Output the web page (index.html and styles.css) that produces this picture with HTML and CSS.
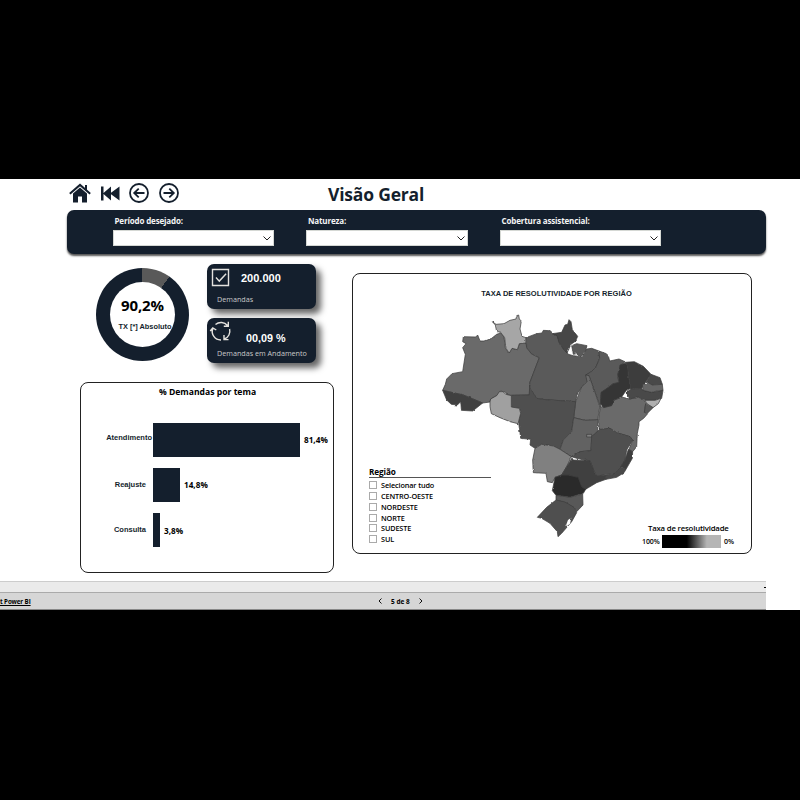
FILE: index.html
```html
<!DOCTYPE html>
<html lang="pt-BR">
<head>
<meta charset="utf-8">
<title>Visão Geral</title>
<link rel="stylesheet" href="styles.css">
</head>
<body>
<div class="report">
  <header class="top">
    <nav class="nav">
      <svg class="ic-home" viewBox="0 0 22 20"><path d="M4 10.5 11 4.400l7 6.100V19.500h-5v-6H9v6H4z" fill="#141f2d"/><path d="M.8 10.800 11 1.900l10.200 8.900M17 6.500V2" fill="none" stroke="#141f2d" stroke-width="2"/></svg>
      <svg class="ic-first" viewBox="0 0 19 15"><path d="M0 .5h2.500v6.400L10 .5v6.300L18.500.5v14L10 8.200v6.300L2.500 8.100v6.400H0z" fill="#141f2d"/></svg>
      <svg class="ic-round" viewBox="0 0 20 20"><circle cx="10" cy="10" r="9"/><path d="M15.500 10H5.500M9.700 5.600 5.200 10l4.500 4.400"/></svg>
      <svg class="ic-round" viewBox="0 0 20 20"><circle cx="10" cy="10" r="9"/><path d="M4.500 10h10M10.300 5.600 14.800 10l-4.500 4.400"/></svg>
    </nav>
    <h1>Visão Geral</h1>
  </header>

  <section class="filters">
    <label class="filter"><span>Período desejado:</span><i class="select"><svg viewBox="0 0 8 5"><path d="M.5.5 4 4 7.500.5"/></svg></i></label>
    <label class="filter"><span>Natureza:</span><i class="select"><svg viewBox="0 0 8 5"><path d="M.5.5 4 4 7.500.5"/></svg></i></label>
    <label class="filter"><span>Cobertura assistencial:</span><i class="select"><svg viewBox="0 0 8 5"><path d="M.5.5 4 4 7.500.5"/></svg></i></label>
  </section>

  <main class="content">
    <div class="left">
      <div class="kpis">
        <div class="donut"><div class="hole"><b>90,2%</b><span>TX [*] Absoluto</span></div></div>
        <div class="cards">
          <div class="card">
            <svg viewBox="0 0 20 20"><path d="M1.500 1.500h16v16h-16zM5 9.500l3.300 3.600 6.800-7.300"/></svg>
            <b>200.000</b><span>Demandas</span>
          </div>
          <div class="card second">
            <svg viewBox="0 0 20 20"><path d="M4.500 3.500a8.500 8.500 0 0 1 12 1M17.300.8v4.500H12.800M18.600 8A8.500 8.500 0 0 1 13.500 18M17.500 18.600H13V14M10 19A8.500 8.500 0 0 1 1.800 7.500M-.8 10 1.800 7 5.300 9"/></svg>
            <b>00,09 %</b><span>Demandas em Andamento</span>
          </div>
        </div>
      </div>
      <div class="panel chart">
        <h2>% Demandas por tema</h2>
        <div class="row"><span class="name wide">Atendimento</span><i class="bar" style="width:147px"></i><b>81,4%</b></div>
        <div class="row"><span class="name">Reajuste</span><i class="bar" style="width:27px"></i><b>14,8%</b></div>
        <div class="row"><span class="name">Consulta</span><i class="bar" style="width:7px"></i><b>3,8%</b></div>
      </div>
    </div>

    <div class="panel region">
      <h3>TAXA DE RESOLUTIVIDADE POR REGIÃO</h3>
      <div class="body">
        <div class="slicer">
          <h4>Região</h4>
          <label><i></i>Selecionar tudo</label>
          <label><i></i>CENTRO-OESTE</label>
          <label><i></i>NORDESTE</label>
          <label><i></i>NORTE</label>
          <label><i></i>SUDESTE</label>
          <label><i></i>SUL</label>
        </div>
        <svg class="map" viewBox="24 15 693 705">
          <defs><filter id="rough" x="-2%" y="-2%" width="104%" height="104%"><feTurbulence type="fractalNoise" baseFrequency="0.07" numOctaves="1" seed="4" result="n"/><feDisplacementMap in="SourceGraphic" in2="n" scale="7" xChannelSelector="R" yChannelSelector="G"/></filter></defs>
          <g filter="url(#rough)" stroke="#3c3c3c" stroke-width="2.200" stroke-linejoin="round">
            <polygon fill="#6a6a6a" points="100,95 137,96 143,90 150,108 165,108 185,100 200,88 212,84 222,96 226,128 235,144 246,130 262,134 268,116 288,114 290,128 304,146 328,158 299,234 298,270 244,271 232,270 226,262 212,258 200,272 182,282 180,291 158,294 100,270 38,256 46,238 50,222 66,206 98,200 106,148 98,128 108,116 98,110"/>
            <polygon fill="#a6a6a6" points="187,50 198,58 222,56 240,46 258,42 260,32 266,30 268,42 274,48 270,72 276,94 288,98 288,114 268,116 262,134 246,130 238,144 228,130 224,98 212,82 200,80 196,60"/>
            <polygon fill="#5a5a5a" points="288,98 320,86 336,84 340,76 357,77 367,86 381,90 391,120 405,134 415,148 430,152 455,155 470,132 485,130 507,138 509,160 497,188 484,200 468,210 474,228 455,246 440,272 437,290 345,284 320,280 308,262 299,234 328,158 304,146 290,128"/>
            <polygon fill="#464646" points="367,86 395,82 405,60 413,58 417,44 423,50 427,74 443,94 437,108 423,118 411,144 401,134 387,112 381,92"/>
            <polygon fill="#5a5a5a" points="425,122 440,116 471,122 467,136 455,156 441,146 430,148"/>
            <path fill="none" stroke="#ccc" stroke-dasharray="6 6" d="M415 130l14 12 12 4 14 10 12-20"/>
            <polygon fill="#5a5a5a" points="507,138 529,146 535,152 539,168 567,162 585,170 570,184 563,212 567,236 545,240 525,256 513,270 511,306 495,262 487,240 477,212 467,210 484,200 497,188 509,160"/>
            <polygon fill="#6a6a6a" points="511,306 545,300 551,286 575,276 599,282 625,276 645,288 647,296 643,322 653,326 641,340 627,350 627,360 622,385 620,425 608,440 597,433 608,405 600,395 560,383 540,370 509,378 506,340"/>
            <polygon fill="#363636" points="570,180 585,174 593,180 595,210 603,250 589,256 575,276 551,286 545,302 521,308 511,296 513,262 531,250 549,236 567,232 563,210"/>
            <polygon fill="#3e3e3e" points="585,172 613,170 640,184 663,208 649,228 635,250 603,252 595,210 593,182"/>
            <polygon fill="#484848" points="663,208 690,218 697,238 667,240 649,230"/>
            <polygon fill="#484848" points="603,252 635,250 639,256 665,262 699,256 695,280 675,286 647,286 625,276 599,282 589,262"/>
            <polygon fill="#666" points="637,238 655,234 667,240 697,238 699,256 680,258 665,262 639,256"/>
            <polygon fill="#b0b0b0" points="645,286 675,286 693,280 685,296 669,308 651,296"/>
            <polygon fill="#585858" points="647,296 669,308 653,324 643,322"/>
            <polygon fill="#6a6a6a" points="467,210 477,212 487,240 495,262 505,292 509,306 503,346 465,346 431,338 437,290 455,246 471,230"/>
            <polygon fill="#505050" points="244,271 298,270 299,240 308,262 320,280 345,284 437,290 431,338 425,380 400,405 390,433 370,423 335,418 315,430 300,420 302,403 272,400 266,350 272,320 268,310 245,308"/>
            <polygon fill="#626262" points="431,338 465,346 505,344 503,382 485,395 483,437 450,440 424,455 390,433 400,405 425,380"/>
            <rect fill="#808080" x="470" y="388" width="15" height="8"/>
            <polygon fill="#a0a0a0" points="180,291 182,282 200,272 208,260 218,260 228,268 244,272 244,306 268,310 272,325 264,356 240,350 210,338 184,326 180,305"/>
            <polygon fill="#404040" points="38,256 100,270 158,294 128,318 94,316 92,290 82,300 64,298 50,285"/>
            <polygon fill="#808080" points="315,430 335,418 370,423 390,433 424,455 410,485 395,510 375,517 367,533 352,530 348,505 310,503 308,465"/>
            <polygon fill="#505050" points="485,395 509,373 540,370 560,383 600,395 608,405 590,435 585,465 570,490 555,505 500,513 490,493 480,467 450,463 424,455 450,440 483,437"/>
            <polygon fill="#404040" points="426,459 430,465 480,467 495,505 500,513 526,510 528,523 500,533 472,550 455,560 445,520 415,510 395,510 410,485"/>
            <polygon fill="#3e3e3e" points="595,433 608,440 607,460 588,493 572,485 585,465"/>
            <polygon fill="#4a4a4a" points="588,493 582,503 560,517 528,523 526,511 555,505 572,487"/>
            <polygon fill="#2c2c2c" points="395,510 415,510 445,517 455,545 467,553 460,565 420,577 378,571 367,557 375,517"/>
            <polygon fill="#585858" points="378,571 420,577 458,567 459,600 440,620 432,607 405,593 378,585"/>
            <polygon fill="#505050" points="378,585 405,591 432,607 440,623 425,650 395,685 384,695 382,680 360,655 335,640 322,637 350,607"/>
            <polygon fill="#fff" stroke="none" points="414,645 424,638 420,656 406,667"/>
          </g>
        </svg>
        <div class="legend">
          <span class="title">Taxa de resolutividade</span>
          <div class="scale"><span>100%</span><i></i><span>0%</span></div>
        </div>
      </div>
    </div>
  </main>

  <div class="scroll"><i></i></div>
  <footer class="foot">
    <span class="brand">t Power BI</span>
    <div class="pager"><svg viewBox="0 0 4 6"><path d="M3.500.5 1 3l2.500 2.500"/></svg><b>5 de 8</b><svg viewBox="0 0 4 6"><path d="M.5.5 3 3 .5 5.500"/></svg></div>
  </footer>
</div>
</body>
</html>
```
FILE: styles.css
```css
* { box-sizing: border-box; }
body { margin: 0; background: #000; height: 800px; padding-top: 179px; overflow: hidden; font-family: "Open Sans", "Noto Sans", sans-serif; color: #000; }
h1, h2, h3, h4 { margin: 0; }
i { display: block; font-style: normal; }
svg { display: block; flex: none; }
.report { background: #fff; height: 431px; display: flex; flex-direction: column; }

.top { height: 31px; flex: none; display: flex; padding-left: 69px; }
.nav { width: 259px; display: flex; align-items: flex-start; padding-top: 4px; }
.ic-home { width: 22px; height: 20px; }
.ic-first { width: 19px; height: 15px; margin: 3px 9.500px 0 9.500px; }
.ic-round { width: 20px; height: 20px; margin-right: 9.500px; fill: none; stroke: #141f2d; stroke-width: 1.8; }
h1 { font-size: 17.5px; line-height: 31px; color: #141f2d; white-space: nowrap; letter-spacing: -.2px; }

.filters { flex: none; width: 699px; height: 44px; margin-left: 67px; background: #141f2d; border-radius: 7px; box-shadow: 0 2px 2px #555; display: flex; gap: 32px; padding: 5px 0 0 45.500px; }
.filter { width: 161.500px; }
.filter span { display: block; padding-left: 2px; font-size: 8px; font-weight: 700; line-height: 12px; color: #f4f4f4; white-space: nowrap; letter-spacing: -.15px; }
.select { height: 16px; margin-top: 3px; width: 161.500px; background: #fff; border: 1px solid #d5d8d4; display: flex; align-items: center; justify-content: flex-end; padding-right: 2px; }
.select svg { width: 8px; height: 5px; fill: none; stroke: #222; }

.content { flex: none; height: 327px; display: flex; padding-left: 80px; gap: 18px; }
.left { width: 254px; }
.kpis { height: 128px; display: flex; padding: 10px 0 0 16px; }
.donut { width: 93px; height: 93px; margin: 4px 18px 0 0; border-radius: 50%; background: conic-gradient(#595959 0 9.800%, #141f2d 9.800%); display: flex; align-items: center; justify-content: center; }
.hole { width: 65px; height: 65px; border-radius: 50%; background: #fff; display: flex; flex-direction: column; align-items: center; padding-top: 14px; }
.hole b { font-size: 15px; line-height: 18px; letter-spacing: -.1px; }
.hole span { font: bold 7.400px/10px "Liberation Sans", sans-serif; margin: 8px 0 0 5px; white-space: nowrap; color: #141f2d; }
.cards { display: flex; flex-direction: column; gap: 9px; }
.card { width: 109px; height: 45px; border-radius: 7px; background: #141f2d; box-shadow: 5px 5px 6px #666; color: #fff; display: grid; grid-template: 28px 14px / 34px 1fr; }
.card svg { width: 20px; height: 20px; margin: 4px 0 0 4px; fill: none; stroke: #e4e2de; stroke-width: 1.400; overflow: visible; }
.card b { font: bold 11px/28px "Liberation Sans", sans-serif; white-space: nowrap; }
.card span { grid-column: 1 / 3; padding-left: 10px; font-size: 7.200px; line-height: 14px; color: #c9c9c9; white-space: nowrap; }
.card.second svg { margin: 3px 0 0 4px; }
.card.second b { font-size: 10.800px; line-height: 40px; padding-left: 5px; }

.panel { border: 1px solid #222; border-radius: 8px; }
.chart { height: 191px; }
.chart h2 { font-size: 8.600px; line-height: 18px; text-align: center; height: 39.500px; padding-left: 1px; }
.row { display: flex; align-items: center; height: 34px; margin-bottom: 11.300px; font-size: 8.200px; }
.row .name { width: 72px; padding-right: 7px; text-align: right; font: bold 7.500px/12px "Liberation Sans", sans-serif; color: #141f2d; }
.row .name.wide { padding: 0 1px 3px 0; }
.row .bar { height: 34px; background: #141f2d; }
.row b { margin-left: 4px; }

.region { width: 400px; height: 281px; margin-top: 19px; }
.region h3 { font: bold 7.500px/12px "Liberation Sans", sans-serif; color: #141f2d; padding: 14px 0 0 9px; text-align: center; height: 36px; }
.body { display: flex; height: 243px; align-items: flex-end; }
.slicer { width: 122px; margin: 0 0 8.500px 16px; flex: none; }
.slicer h4 { font-size: 8.200px; line-height: 11px; border-bottom: 1px solid #555; margin-bottom: 2px; height: 12px; letter-spacing: -.1px; }
.slicer label { display: flex; align-items: center; height: 10.800px; font-size: 7.300px; font-weight: 600; letter-spacing: -.12px; }
.slicer label i { width: 8px; height: 8px; border: 1px solid #aaa; margin-right: 4px; }
.map { width: 231px; height: 235px; margin: 0 0 8px -53px; }
.legend { width: 102px; margin: 0 0 5px -27px; flex: none; font-size: 7px; font-weight: 600; letter-spacing: -.1px; }
.legend .title { display: block; font-size: 7.800px; line-height: 11px; margin: 0 0 1px 6px; white-space: nowrap; letter-spacing: -.2px; }
.scale { display: flex; align-items: center; gap: 3px; }
.scale span:first-child { width: 17px; margin-right: 0; }
.scale i { width: 59px; height: 13px; background: linear-gradient(90deg, #000 42%, #b5b5b5 76%); }

.scroll { flex: none; width: 766px; height: 11px; background: #eaeaea; border-top: 1px solid #ccc; display: flex; justify-content: flex-end; align-items: center; }
.scroll i { width: 2px; height: 1px; background: #000; }
.foot { width: 766px; flex: 1; background: #d6d6d6; border-top: 1px solid #aaa; border-bottom: 1px solid #888; display: flex; align-items: center; font-size: 6.500px; }
.brand { width: 378px; text-decoration: underline; font-weight: 700; font-size: 6.200px; letter-spacing: -.1px; }
.pager { display: flex; align-items: center; gap: 9px; }
.pager svg { width: 4px; height: 6px; fill: none; stroke: #111; }
```
